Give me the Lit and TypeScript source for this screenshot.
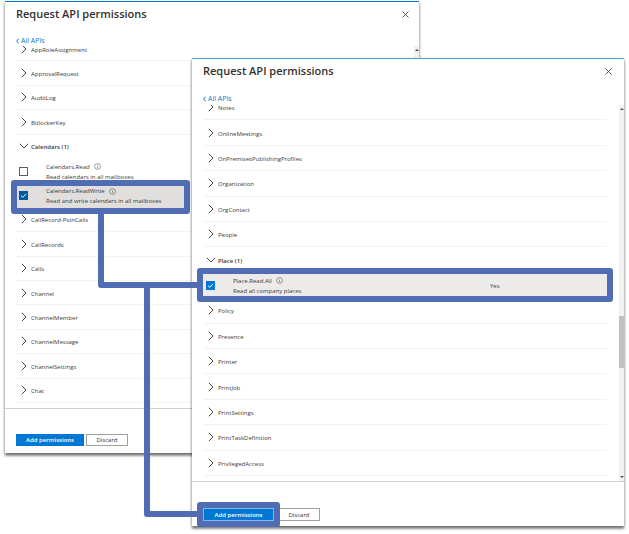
import { LitElement, html, svg, css, nothing } from "lit";
import { customElement, property } from "lit/decorators.js";

interface Permission {
  name: string;
  description: string;
  checked: boolean;
  framed?: boolean;
  consent?: string;
}

interface Group {
  name: string;
  permissions?: Permission[];
}

const plain = (...names: string[]): Group[] => names.map((name) => ({ name }));

const CALENDAR_GROUPS: Group[] = [
  ...plain("AppRoleAssignment", "ApprovalRequest", "AuditLog", "BitlockerKey"),
  {
    name: "Calendars (1)",
    permissions: [
      { name: "Calendars.Read", description: "Read calendars in all mailboxes", checked: false },
      {
        name: "Calendars.ReadWrite",
        description: "Read and write calendars in all mailboxes",
        checked: true,
        framed: true,
      },
    ],
  },
  ...plain(
    "CallRecord-PstnCalls",
    "CallRecords",
    "Calls",
    "Channel",
    "ChannelMember",
    "ChannelMessage",
    "ChannelSettings",
    "Chat",
  ),
];

const PLACE_GROUPS: Group[] = [
  ...plain(
    "Notes",
    "OnlineMeetings",
    "OnPremisesPublishingProfiles",
    "Organization",
    "OrgContact",
    "People",
  ),
  {
    name: "Place (1)",
    permissions: [
      {
        name: "Place.Read.All",
        description: "Read all company places",
        checked: true,
        framed: true,
        consent: "Yes",
      },
    ],
  },
  ...plain(
    "Policy",
    "Presence",
    "Printer",
    "PrintJob",
    "PrintSettings",
    "PrintTaskDefinition",
    "PrivilegedAccess",
  ),
];

@customElement("permission-panel")
export class PermissionPanel extends LitElement {
  @property({ attribute: false }) groups: Group[] = [];
  @property({ type: Boolean, reflect: true }) front = false;

  static styles = css`
    :host {
      --accent: #0078d4;
      --frame: #4f6cb5;
      --line: #0f7bd0;
      --selected: #e1dfdd;
      --list-height: 366px;
      --head-height: 45px;
      --clip: 9px;
      --add-width: 68px;
      --frame-left: -5px;
      --frame-top: -3px;
      --frame-bottom: -7px;
      --frame-width: 179px;
      display: flex;
      flex-direction: column;
      box-sizing: border-box;
      position: relative;
      background: #fff;
      color: #3b3a39;
      font: 6px/10px "Open Sans", "Noto Sans", sans-serif;
      box-shadow:
        0 2px 3px rgba(0, 0, 0, 0.5),
        0 3px 2px rgba(0, 0, 0, 0.2);
    }
    :host([front]) {
      --line: #4ba0dc;
      --selected: #edebe9;
      --list-height: 381px;
      --head-height: 47px;
      --clip: 10px;
      --add-width: 71px;
      --frame-left: -6px;
      --frame-top: -5px;
      --frame-bottom: -5px;
      --frame-width: calc(100% + 12px);
    }
    .head {
      box-sizing: border-box;
      height: var(--head-height);
      border-top: 1px solid var(--line);
      padding: 4px 10px 0 11px;
      display: flex;
      flex-direction: column;
      justify-content: space-between;
    }
    :host([front]) .head {
      padding-right: 12px;
      padding-bottom: 1px;
    }
    .bar {
      display: flex;
      justify-content: space-between;
      align-items: center;
    }
    h2 {
      margin: 0;
      font-size: 11px;
      line-height: 16px;
      font-weight: 600;
      color: #323130;
    }
    button {
      font: inherit;
      margin: 0;
      padding: 0;
      cursor: pointer;
    }
    .close {
      border: 0;
      background: none;
      width: 7px;
      height: 7px;
      display: flex;
    }
    svg {
      display: block;
      fill: none;
      stroke: #484644;
    }
    .back {
      display: flex;
      align-items: center;
      gap: 2px;
      align-self: flex-start;
      font-size: 7px;
      color: #0f7bd0;
      text-decoration: none;
    }
    .back svg {
      stroke: #0f7bd0;
    }
    .view {
      position: relative;
      overflow: hidden;
      padding: 0 17px 5px 11px;
    }
    .list {
      display: grid;
      grid-auto-rows: 1fr;
      height: var(--list-height);
      margin-top: calc(-1 * var(--clip));
    }
    .row {
      box-sizing: border-box;
      position: relative;
      min-height: 0;
      display: flex;
      align-items: center;
      border: 0;
      border-bottom: 1px solid #f4f3f2;
      background: none;
      color: inherit;
      text-align: left;
    }
    .glyph {
      width: 15px;
      flex: none;
      display: flex;
      justify-content: center;
    }
    .open {
      font-weight: 600;
      border-bottom-color: transparent;
    }
    .name,
    .text,
    .consent {
      padding-top: 2px;
    }
    .permission {
      display: grid;
      grid-template-columns: 15px 15px 257px auto;
      border-bottom-color: transparent;
    }
    .permission > * {
      z-index: 1;
    }
    input {
      appearance: none;
      box-sizing: border-box;
      width: 9px;
      height: 9px;
      margin: 0;
      border: 1px solid #605e5c;
      background: #fff;
      display: block;
    }
    .tick {
      display: grid;
      justify-content: center;
      padding-top: 1px;
    }
    .tick > * {
      grid-area: 1 / 1;
    }
    input:checked {
      background: #005a9e;
      border-color: #005a9e;
    }
    :host([front]) input:checked {
      background: var(--accent);
      border-color: var(--accent);
    }
    .tick svg {
      stroke: #fff;
      pointer-events: none;
    }
    .text {
      grid-column: 3;
      white-space: nowrap;
    }
    .first {
      display: flex;
      align-items: center;
      gap: 4px;
    }
    .info {
      stroke: #605e5c;
    }
    .permission .frame {
      position: absolute;
      z-index: 0;
      box-sizing: border-box;
      left: var(--frame-left);
      top: var(--frame-top);
      bottom: var(--frame-bottom);
      width: var(--frame-width);
      border: 6px solid var(--frame);
      border-radius: 3px;
      background: var(--selected);
    }
    .foot {
      border-top: 1px solid #d2d0ce;
      padding: 25px 11px 7px;
      display: flex;
      gap: 2px;
    }
    :host([front]) .foot {
      gap: 4px;
      padding-top: 26px;
      padding-bottom: 5px;
    }
    .foot button {
      box-sizing: border-box;
      height: 12px;
      line-height: 10px;
      border: 1px solid #a19f9d;
      background: #fff;
      color: #323130;
      width: 42px;
    }
    :host([front]) .foot button {
      height: 13px;
    }
    .foot .add {
      position: relative;
      width: var(--add-width);
      background: var(--accent);
      border-color: var(--accent);
      color: #fff;
      font-weight: 600;
    }
    :host([front]) .foot .add {
      border-color: #7fb6e6;
    }
    :host([front]) .add::after {
      content: "";
      position: absolute;
      inset: -7px;
      border: 6px solid var(--frame);
      border-radius: 3px;
    }
    .scroll {
      position: absolute;
      top: 0;
      right: 0;
      bottom: 0;
      width: 5px;
      background: #f1f1f1;
    }
    .up,
    .down {
      position: absolute;
      right: 0;
      border: 2px solid transparent;
    }
    .up {
      top: 1px;
      border-bottom-color: #505050;
    }
    .down {
      bottom: 1px;
      border-top-color: #505050;
    }
    .thumb {
      position: absolute;
      top: 56%;
      height: 14%;
      width: 100%;
      background: #c1c1c1;
    }
  `;

  private permission(p: Permission) {
    const id = p.name.replace(/\./g, "-");
    return html`<div class="row permission">
      ${p.framed ? html`<span class="frame"></span>` : nothing}
      <span class="tick">
        <input type="checkbox" id=${id} .checked=${p.checked} />
        ${p.checked
          ? html`<svg width="9" height="9" viewBox="0 0 9 9">${svg`<path d="M2 4.6 3.8 6.3 7.2 2.9" />`}</svg>`
          : nothing}
      </span>
      <label class="text" for=${id}>
        <span class="first"
          >${p.name}<svg class="info" width="7" height="7" viewBox="0 0 7 7" stroke-width=".6">
            <circle cx="3.5" cy="3.5" r="2.9" />
            <path d="M3.5 3v2.2M3.5 1.8v.6" /></svg
        ></span>
        <span>${p.description}</span>
      </label>
      ${p.consent ? html`<span class="consent">${p.consent}</span>` : nothing}
    </div>`;
  }

  private group(g: Group) {
    const open = !!g.permissions;
    return html`<button class="row ${open ? "open" : ""}" aria-expanded=${open}>
        <span class="glyph">
          ${open
            ? html`<svg width="10" height="10" viewBox="0 0 10 10"><path d="M.8 2.8 5 7 9.2 2.8" /></svg>`
            : html`<svg width="6" height="10" viewBox="0 0 6 10"><path d="M.8 .8 5 5 .8 9.2" /></svg>`}
        </span>
        <span class="name">${g.name}</span>
      </button>
      ${g.permissions?.map((p) => this.permission(p))}`;
  }

  render() {
    return html`
      <header class="head">
        <div class="bar">
          <h2>Request API permissions</h2>
          <button class="close" aria-label="Close">
            <svg width="7" height="7" viewBox="0 0 7 7" stroke-width=".9"><path d="M.5.5l6 6M6.5.5l-6 6" /></svg>
          </button>
        </div>
        <a class="back" href="#apis"
          ><svg width="3" height="6" viewBox="0 0 3 6"><path d="M2.6.6.7 3l1.9 2.4" /></svg>All APIs</a
        >
      </header>
      <div class="view">
        <div class="list">${this.groups.map((g) => this.group(g))}</div>
        <div class="scroll">
          <span class="up"></span>
          ${this.front ? html`<span class="thumb"></span>` : nothing}
          <span class="down"></span>
        </div>
      </div>
      <footer class="foot">
        <button class="add">Add permissions</button>
        <button>Discard</button>
      </footer>
    `;
  }
}

@customElement("app-root")
export class AppRoot extends LitElement {
  static styles = css`
    :host {
      display: block;
      background: #fff;
    }
    .stage {
      position: relative;
      display: grid;
      grid-template-columns: 5px 187fr 227fr 205fr 5px;
      grid-template-rows: 1px 57px auto;
      padding-bottom: 8px;
    }
    .calendars {
      grid-area: 2 / 2 / 4 / 4;
      align-self: start;
    }
    .places {
      grid-area: 3 / 3 / 4 / 5;
      align-self: start;
    }
    .wires {
      position: absolute;
      left: 0;
      top: 0;
      fill: none;
      stroke: #4f6cb5;
      stroke-width: 6;
      stroke-linejoin: round;
      pointer-events: none;
    }
  `;

  render() {
    return html`<main class="stage">
      <permission-panel class="calendars" .groups=${CALENDAR_GROUPS}></permission-panel>
      <permission-panel class="places" front .groups=${PLACE_GROUPS}></permission-panel>
      <svg class="wires" width="200" height="520" viewBox="0 0 200 520">
        <path d="M101 212V285H199M147 285V514H199" />
      </svg>
    </main>`;
  }
}
